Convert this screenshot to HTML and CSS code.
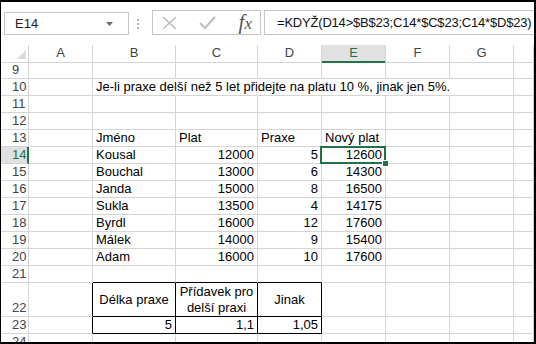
FILE: index.html
```html
<!DOCTYPE html>
<html lang="cs">
<head>
    <meta charset="UTF-8">
    <title>KDYŽ - přídavek na platu</title>
    <link rel="stylesheet" href="styles.css">
</head>
<body>
<div class="window">
    <div class="toolbar">
        <div class="namebox">
            <span>E14</span>
            <svg width="7" height="4" viewBox="0 0 7 4"><polygon points="0,0 7,0 3.5,4" fill="#6b6b6b"/></svg>
        </div>
        <svg class="dots" width="2" height="10" viewBox="0 0 2 10">
            <rect x="0" y="0" width="2" height="2" fill="#b4b4b4"/>
            <rect x="0" y="4" width="2" height="2" fill="#b4b4b4"/>
            <rect x="0" y="8" width="2" height="2" fill="#b4b4b4"/>
        </svg>
        <div class="fxbox">
            <svg width="15" height="14" viewBox="0 0 15 14"><path d="M1 1 L14 13 M14 1 L1 13" stroke="#bdbdbd" stroke-width="1.6" fill="none"/></svg>
            <svg width="17" height="14" viewBox="0 0 17 14"><path d="M1 7 L6 12 L16 1" stroke="#bdbdbd" stroke-width="2" fill="none"/></svg>
            <span class="fx">f<span class="fx-x">x</span></span>
        </div>
        <div class="formula">=KDYŽ(D14&gt;$B$23;C14*$C$23;C14*$D$23)</div>
    </div>

    <div class="sheet">
        <div class="row head">
            <div class="corner"><svg width="9" height="9" viewBox="0 0 9 9"><polygon points="9,0 9,9 0,9" fill="#dcdcdc"/></svg></div>
            <div class="ch">A</div><div class="ch">B</div><div class="ch">C</div><div class="ch">D</div>
            <div class="ch ch-sel">E</div><div class="ch">F</div><div class="ch">G</div><div class="ch"></div>
        </div>
        <div class="row">
            <div class="rh">9</div><div></div><div></div><div></div><div></div><div></div><div></div><div></div><div></div>
        </div>
        <div class="row">
            <div class="rh">10</div><div></div>
            <div class="wide">Je-li praxe delší než 5 let přidejte na platu 10 %, jinak jen 5%.</div>
            <div></div>
        </div>
        <div class="row">
            <div class="rh">11</div><div></div><div></div><div></div><div></div><div></div><div></div><div></div><div></div>
        </div>
        <div class="row">
            <div class="rh">12</div><div></div><div></div><div></div><div></div><div></div><div></div><div></div><div></div>
        </div>
        <div class="row">
            <div class="rh">13</div><div></div><div>Jméno</div><div>Plat</div><div>Praxe</div><div>Nový plat</div><div></div><div></div><div></div>
        </div>
        <div class="row">
            <div class="rh rh-sel">14</div><div></div><div>Kousal</div><div class="num">12000</div><div class="num">5</div><div class="num active">12600</div><div></div><div></div><div></div>
        </div>
        <div class="row">
            <div class="rh">15</div><div></div><div>Bouchal</div><div class="num">13000</div><div class="num">6</div><div class="num">14300</div><div></div><div></div><div></div>
        </div>
        <div class="row">
            <div class="rh">16</div><div></div><div>Janda</div><div class="num">15000</div><div class="num">8</div><div class="num">16500</div><div></div><div></div><div></div>
        </div>
        <div class="row">
            <div class="rh">17</div><div></div><div>Sukla</div><div class="num">13500</div><div class="num">4</div><div class="num">14175</div><div></div><div></div><div></div>
        </div>
        <div class="row">
            <div class="rh">18</div><div></div><div>Byrdl</div><div class="num">16000</div><div class="num">12</div><div class="num">17600</div><div></div><div></div><div></div>
        </div>
        <div class="row">
            <div class="rh">19</div><div></div><div>Málek</div><div class="num">14000</div><div class="num">9</div><div class="num">15400</div><div></div><div></div><div></div>
        </div>
        <div class="row">
            <div class="rh">20</div><div></div><div>Adam</div><div class="num">16000</div><div class="num">10</div><div class="num">17600</div><div></div><div></div><div></div>
        </div>
        <div class="row">
            <div class="rh">21</div><div></div><div class="edge-b"></div><div class="edge-b"></div><div class="edge-b"></div><div></div><div></div><div></div><div></div>
        </div>
        <div class="row tall">
            <div class="rh">22</div><div class="edge-r"></div>
            <div class="boxed center">Délka praxe</div>
            <div class="boxed center">Přídavek pro delší praxi</div>
            <div class="boxed center">Jinak</div>
            <div></div><div></div><div></div><div></div>
        </div>
        <div class="row">
            <div class="rh">23</div><div class="edge-r"></div><div class="boxed num">5</div><div class="boxed num">1,1</div><div class="boxed num">1,05</div><div></div><div></div><div></div><div></div>
        </div>
        <div class="row">
            <div class="rh">24</div><div></div><div></div><div></div><div></div><div></div><div></div><div></div><div></div>
        </div>
    </div>
</div>
</body>
</html>
```

FILE: styles.css
```css
* {
    box-sizing: border-box;
}
html, body {
    margin: 0;
    padding: 0;
    background: #fff;
}
body {
    font-family: "Liberation Sans", Arial, sans-serif;
    color: #000;
}
.window {
    width: 536px;
    height: 344px;
    border: 2px solid #000;
    border-left-width: 1px;
    overflow: hidden;
    background: #fff;
}

/* formula bar */
.toolbar {
    height: 43px;
    display: flex;
    align-items: flex-start;
    padding: 8px 0 0 3px;
}
.namebox {
    width: 125px;
    height: 23px;
    margin-top: 2px;
    border: 1px solid #c6c6c6;
    display: flex;
    align-items: center;
    justify-content: space-between;
    padding: 0 15px 0 10px;
    font-size: 13px;
    color: #222;
}
.dots {
    margin: 9px 0 0 8px;
}
.fxbox {
    width: 109px;
    height: 25px;
    margin-left: 13px;
    border: 1px solid #c6c6c6;
    display: flex;
    align-items: center;
    justify-content: space-between;
    padding: 0 8px 0 9px;
}
.fx {
    font-family: "Liberation Serif", "Times New Roman", serif;
    font-style: italic;
    font-size: 21px;
    color: #555;
    line-height: 20px;
}
.fx-x {
    font-size: 17px;
}
.formula {
    flex: 1;
    height: 25px;
    margin: 0 -6px 0 3px;
    border: 1px solid #c6c6c6;
    padding: 0 0 0 12px;
    font-size: 13px;
    line-height: 23px;
    color: #111;
    white-space: nowrap;
    letter-spacing: -0.2px;
}

/* grid */
.row {
    display: grid;
    grid-template-columns: 28px 64px 83px 82px 64px 64px 64px 64px 1fr;
    height: 17px;
}
.row > div {
    border-right: 1px solid #d4d4d4;
    border-bottom: 1px solid #d4d4d4;
    font-size: 13px;
    line-height: 16px;
    padding: 0 3px;
    white-space: nowrap;
}
.row.tall {
    height: 34px;
}
.row.tall > div {
    display: flex;
    align-items: flex-end;
}
.ch {
    text-align: center;
    color: #444;
}
.ch-sel {
    background: #e1e1e1;
    color: #217346;
    border-bottom: 2px solid #217346 !important;
}
.corner {
    display: flex;
    align-items: flex-end;
    justify-content: flex-end;
    padding: 0 2px 3px 0 !important;
}
.rh {
    color: #444;
    padding-left: 11px !important;
}
.rh-sel {
    background: #e1e1e1;
    color: #217346;
    border-right: 2px solid #217346 !important;
}
.wide {
    grid-column: span 6;
}
.num {
    text-align: right;
}
.active {
    position: relative;
}
.active::after {
    content: "";
    position: absolute;
    left: -2px;
    top: -1px;
    right: -1px;
    bottom: -1px;
    border: 2px solid #217346;
}
.active::before {
    content: "";
    position: absolute;
    right: -4px;
    bottom: -4px;
    width: 5px;
    height: 5px;
    background: #217346;
    border: 1px solid #fff;
    z-index: 1;
}

/* bordered parameter table */
.edge-b {
    border-bottom-color: #000 !important;
}
.edge-r {
    border-right-color: #000 !important;
}
.boxed {
    border-right-color: #000 !important;
    border-bottom-color: #000 !important;
}
.row.tall > .center {
    align-items: center;
    justify-content: center;
    text-align: center;
    white-space: normal;
}
```
